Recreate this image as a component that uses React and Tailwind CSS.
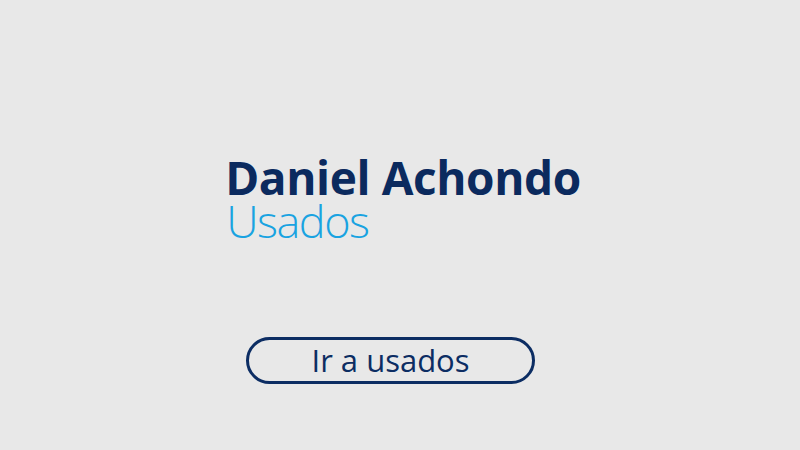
export default function App() {
  return (
    <div className="w-[800px] h-[450px] bg-[#e8e8e8] flex flex-col items-center font-['Open_Sans',sans-serif]">
      <div className="mt-[155px] ml-[6px] flex flex-col items-start">
        <h1 className="text-[46px] leading-[44px] font-bold text-[#0b2a5e] tracking-[-0.4px]">
          Daniel Achondo
        </h1>
        <p className="ml-[1px] text-[45px] leading-[44px] font-light text-[#19a3e1] tracking-[-1.5px]">Usados</p>
      </div>
      <button
        type="button"
        className="mt-[94px] mr-[19px] w-[289px] h-[47px] rounded-full border-[3px] border-[#0c2d63] text-[#0c2d63] text-[31px] leading-none flex items-center justify-center"
      >
        Ir a usados
      </button>
    </div>
  );
}
